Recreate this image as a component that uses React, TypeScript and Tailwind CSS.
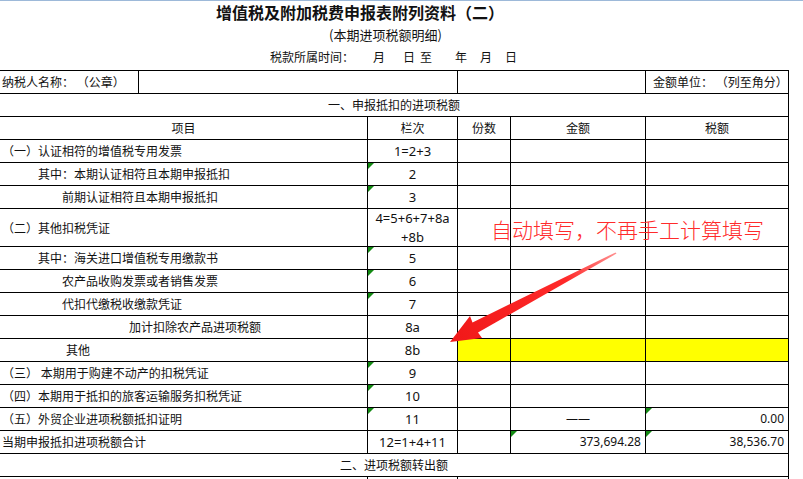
import React from 'react';

type Row = {
  label: string;
  indent: string;
  code: string;
  mark?: boolean;
  tall?: boolean;
  yellow?: boolean;
  amount?: string;
  tax?: string;
  amountMark?: boolean;
  taxMark?: boolean;
  amountCenter?: boolean;
};

const rows: Row[] = [
  { label: '（一）认证相符的增值税专用发票', indent: 'pl-[2px]', code: '1=2+3' },
  { label: '其中：本期认证相符且本期申报抵扣', indent: 'pl-[38px]', code: '2', mark: true },
  { label: '前期认证相符且本期申报抵扣', indent: 'pl-[62px]', code: '3', mark: true },
  { label: '（二）其他扣税凭证', indent: 'pl-[2px]', code: '4=5+6+7+8a', tall: true },
  { label: '其中：海关进口增值税专用缴款书', indent: 'pl-[38px]', code: '5', mark: true },
  { label: '农产品收购发票或者销售发票', indent: 'pl-[62px]', code: '6', mark: true },
  { label: '代扣代缴税收缴款凭证', indent: 'pl-[62px]', code: '7', mark: true },
  { label: '加计扣除农产品进项税额', indent: 'pl-[129px]', code: '8a' },
  { label: '其他', indent: 'pl-[66px]', code: '8b', yellow: true },
  { label: '（三） 本期用于购建不动产的扣税凭证', indent: 'pl-[2px]', code: '9', mark: true },
  { label: '（四）本期用于抵扣的旅客运输服务扣税凭证', indent: 'pl-[2px]', code: '10', mark: true },
  { label: '（五）外贸企业进项税额抵扣证明', indent: 'pl-[2px]', code: '11', mark: true, amount: '——', amountCenter: true, tax: '0.00', taxMark: true },
  { label: '当期申报抵扣进项税额合计', indent: 'pl-[2px]', code: '12=1+4+11', amount: '373,694.28', amountMark: true, tax: '38,536.70', taxMark: true },
];

const num = "font-['Noto_Sans','Noto_Sans_CJK_SC',sans-serif]";

function Mark() {
  return <span className="absolute left-0 top-0 h-0 w-0 border-t-[6px] border-r-[6px] border-t-[#138a13] border-r-transparent" />;
}

function Line({ r }: { r: Row }) {
  const h = r.tall ? 'h-[38px]' : 'h-[23px]';
  const fill = r.yellow ? 'bg-[#ffff00]' : '';
  return (
    <div className={`flex ${h} border-b border-black`}>
      <div className={`flex w-[368px] items-center border-r border-black ${r.indent}`}>{r.label}</div>
      <div className={`relative flex w-[90px] items-center justify-center border-r border-black text-center text-[13px] leading-[19px] ${num}`}>
        {r.mark && <Mark />}
        {r.tall ? (
          <span>
            4=5+6+7+8a
            <br />
            +8b
          </span>
        ) : (
          r.code
        )}
      </div>
      <div className={`w-[53px] border-r border-black ${fill}`} />
      <div
        className={`relative flex w-[135px] items-center border-r border-black pr-[4px] ${num} ${fill} ${
          r.amountCenter ? 'justify-center pl-[4px]' : 'justify-end'
        }`}
      >
        {r.amountMark && <Mark />}
        {r.amount}
      </div>
      <div className={`relative flex w-[143px] items-center justify-end border-r border-black pr-[4px] ${num} ${fill}`}>
        {r.taxMark && <Mark />}
        {r.tax}
      </div>
    </div>
  );
}

export default function App() {
  return (
    <div className="relative h-[479px] w-[803px] overflow-hidden bg-white font-['Noto_Sans_CJK_SC','Microsoft_YaHei',sans-serif] text-[12px] text-[#111]">
      <div className="h-px bg-[#9db9d9]" />
      <div className="h-[23px] pl-[216px] text-[16px] font-bold leading-[23px]">增值税及附加税费申报表附列资料（二）</div>
      <div className="h-[22px] pl-[329px] text-[13px] leading-[22px]">(本期进项税额明细)</div>
      <div className="flex h-[22px] items-center pl-[270px] leading-[22px]">
        <span>税款所属时间：</span>
        <span className="ml-[19px]">月</span>
        <span className="ml-[18px]">日</span>
        <span className="ml-[5px]">至</span>
        <span className="ml-[23px]">年</span>
        <span className="ml-[13px]">月</span>
        <span className="ml-[13px]">日</span>
      </div>

      <div className="mt-[2px] w-[789px] border-t border-black">
        <div className="flex h-[23px] border-b border-black">
          <div className="flex w-[139px] items-center border-r border-black pl-[2px]">纳税人名称：&nbsp;（公章）</div>
          <div className="w-[319px] border-r border-black" />
          <div className="w-[188px] border-r border-black" />
          <div className="flex w-[143px] items-center border-r border-black pl-[7px]">金额单位：&nbsp;（列至角分）</div>
        </div>
        <div className="flex h-[23px] items-center justify-center border-b border-r border-black">一、申报抵扣的进项税额</div>
        <div className="flex h-[23px] border-b border-black">
          <div className="flex w-[368px] items-center justify-center border-r border-black">项目</div>
          <div className="flex w-[90px] items-center justify-center border-r border-black">栏次</div>
          <div className="flex w-[53px] items-center justify-center border-r border-black">份数</div>
          <div className="flex w-[135px] items-center justify-center border-r border-black">金额</div>
          <div className="flex w-[143px] items-center justify-center border-r border-black">税额</div>
        </div>
        {rows.map((r) => (
          <Line key={r.code} r={r} />
        ))}
        <div className="flex h-[23px] items-center justify-center border-b border-r border-black">二、进项税额转出额</div>
        <div className="flex h-[23px]">
          <div className="w-[368px] border-r border-black" />
          <div className="w-[90px] border-r border-black" />
          <div className="w-[331px] border-r border-black" />
        </div>
      </div>

      <span className="pointer-events-none absolute left-[491px] top-[217px] whitespace-nowrap text-[21px] font-light leading-[24px] text-[#ff2b2b]">
        自动填写，不再手工计算填写
      </span>
      <svg className="pointer-events-none absolute left-0 top-0" width="803" height="479" viewBox="0 0 803 479">
        <defs>
          <linearGradient id="arrowFade" x1="616" y1="253" x2="450" y2="341" gradientUnits="userSpaceOnUse">
            <stop offset="0" stopColor="#ff9090" />
            <stop offset="0.3" stopColor="#ff2a2a" />
            <stop offset="1" stopColor="#f01818" />
          </linearGradient>
        </defs>
        <polygon
          points="450,342 482,338 478,332.5 616.5,253.6 615.5,252.4 472.5,322.5 470,316"
          fill="url(#arrowFade)"
        />
      </svg>
    </div>
  );
}
